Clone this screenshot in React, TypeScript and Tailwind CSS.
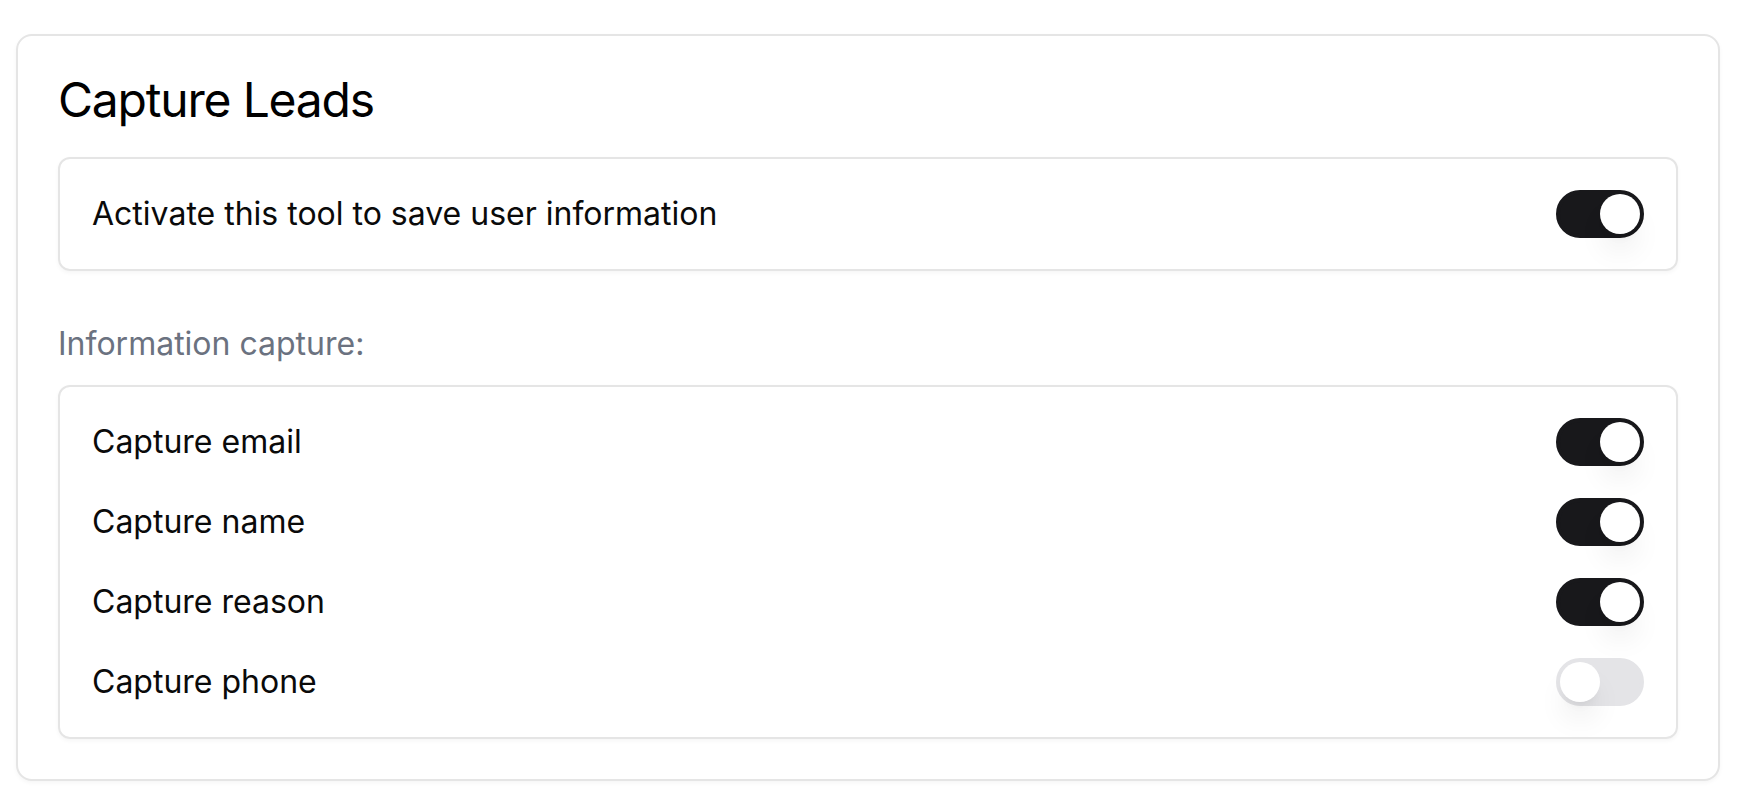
import React from "react";

function Toggle({ on }: { on: boolean }) {
  return (
    <div
      className={
        "relative flex h-[48px] w-[88px] shrink-0 items-center rounded-full border-[4px] " +
        (on ? "border-[#18181b] bg-[#18181b]" : "border-[#e4e4e7] bg-[#e4e4e7]")
      }
    >
      <span
        className={
          "block h-[40px] w-[40px] rounded-full bg-white shadow-[0_20px_30px_-6px_rgba(0,0,0,0.1),0_8px_12px_-8px_rgba(0,0,0,0.1)] " +
          (on ? "translate-x-[40px]" : "translate-x-0")
        }
      />
    </div>
  );
}

function Row({ label, on }: { label: string; on: boolean }) {
  return (
    <div className="flex h-[48px] items-center justify-between">
      <span className="text-[32px] leading-[48px] text-[#0a0a0a]">{label}</span>
      <Toggle on={on} />
    </div>
  );
}

export default function App() {
  return (
    <div
      className="min-h-screen bg-white pl-[16px] pt-[34px]"
      style={{ fontFamily: "Inter, 'Noto Sans', sans-serif" }}
    >
      <div className="w-[1704px] rounded-[16px] border-2 border-[#e5e5e5] bg-white px-[40px] pb-[40px] pt-[40px] shadow-[0_2px_4px_rgba(0,0,0,0.04)]">
        <h1 className="text-[48px] font-normal leading-[48px] tracking-tight text-black">Capture Leads</h1>
        <div className="mt-[33px] rounded-[12px] border-2 border-[#e5e5e5] px-[32px] py-[31px] shadow-[0_2px_4px_rgba(0,0,0,0.04)]">
          <Row label="Activate this tool to save user information" on={true} />
        </div>
        <div className="mb-[17px] mt-[49px] text-[32px] leading-[48px] text-[#6b7280]">
          Information capture:
        </div>
        <div className="flex flex-col gap-[32px] rounded-[12px] border-2 border-[#e5e5e5] px-[32px] py-[31px] shadow-[0_2px_4px_rgba(0,0,0,0.04)]">
          <Row label="Capture email" on={true} />
          <Row label="Capture name" on={true} />
          <Row label="Capture reason" on={true} />
          <Row label="Capture phone" on={false} />
        </div>
      </div>
    </div>
  );
}
